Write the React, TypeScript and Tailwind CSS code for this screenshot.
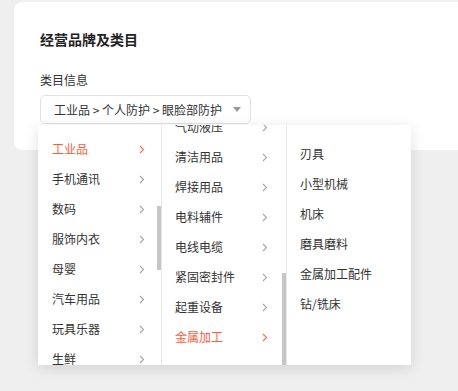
import React from "react";

const col1 = ["工业品", "手机通讯", "数码", "服饰内衣", "母婴", "汽车用品", "玩具乐器", "生鲜"];
const col2 = ["气动液压", "清洁用品", "焊接用品", "电料辅件", "电线电缆", "紧固密封件", "起重设备", "金属加工"];
const col3 = ["刃具", "小型机械", "机床", "磨具磨料", "金属加工配件", "钻/铣床"];

function Chevron({ active }: { active?: boolean }) {
  return (
    <svg width="6" height="9" viewBox="0 0 6 9" fill="none">
      <path
        d="M1 1l3.5 3.5L1 8"
        stroke={active ? "#ff6a4d" : "#a6a6a6"}
        strokeWidth="1.1"
      />
    </svg>
  );
}

function Item({ label, active, arrow }: { label: string; active?: boolean; arrow?: boolean }) {
  return (
    <div
      className={`flex h-[30px] shrink-0 items-center justify-between text-[12px] ${
        active ? "text-[#ff5b3b]" : "text-[#333]"
      }`}
    >
      <span>{label}</span>
      {arrow && <Chevron active={active} />}
    </div>
  );
}

export default function App() {
  return (
    <div
      className="h-[391px] w-[458px] overflow-hidden bg-[#efefef]"
      style={{ fontFamily: '"Noto Sans CJK SC", "Noto Sans", sans-serif' }}
    >
      <div className="ml-[14px] mt-[2px] h-[148px] w-[460px] rounded-lg bg-white pl-[26px] pt-[27px]">
        <h2 className="text-[14px] font-semibold leading-[20px] text-[#222]">经营品牌及类目</h2>
        <p className="mt-[23px] text-[12px] leading-[16px] text-[#333]">类目信息</p>
        <div className="relative mt-[7px]">
          <div className="flex h-[29px] w-[211px] items-center justify-between rounded-[5px] border border-[#e2e2e2] pl-[13px] pr-[9px] text-[12px] text-[#333]">
            <span>工业品 &gt; 个人防护 &gt; 眼脸部防护</span>
            <svg width="8" height="5" viewBox="0 0 8 5">
              <path d="M0 0h8L4 5z" fill="#999" />
            </svg>
          </div>

          <div className="absolute left-[-2px] top-[30px] z-10 flex h-[240px] w-[373px] bg-white shadow-[0_3px_14px_rgba(0,0,0,0.12)]">
            <div className="relative w-[124px] overflow-hidden border-r border-[#e8e8e8] pl-[14px] pr-[16px]">
              <div className="mt-[9px] flex flex-col">
                {col1.map((c, i) => (
                  <Item key={c} label={c} active={i === 0} arrow />
                ))}
              </div>
              <div className="absolute right-0 top-[81px] h-[64px] w-[4px] bg-[#c6c6c6]" />
            </div>
            <div className="relative w-[125px] overflow-hidden border-r border-[#e8e8e8] pl-[13px] pr-[18px]">
              <div className="mt-[-13px] flex flex-col">
                {col2.map((c, i) => (
                  <Item key={c} label={c} active={i === col2.length - 1} arrow />
                ))}
              </div>
              <div className="absolute bottom-0 right-0 h-[92px] w-[4px] bg-[#c6c6c6]" />
            </div>
            <div className="w-[124px] pl-[13px]">
              <div className="mt-[14px] flex flex-col">
                {col3.map((c) => (
                  <Item key={c} label={c} />
                ))}
              </div>
            </div>
          </div>
        </div>
      </div>
    </div>
  );
}
